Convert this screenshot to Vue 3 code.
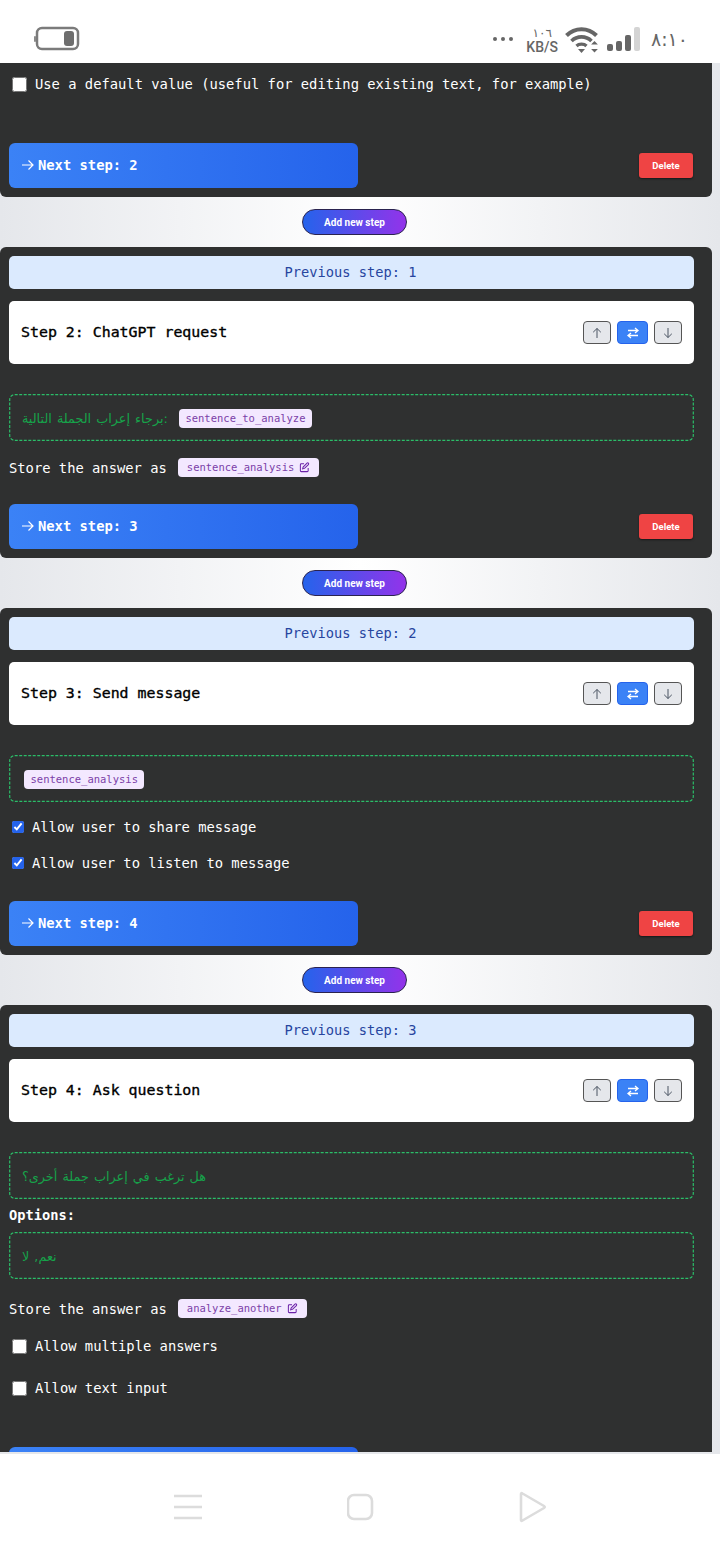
<template>
  <div class="phone">
    <div class="status">
      <svg class="battery" width="46" height="26" viewBox="0 0 46 26">
        <rect x="3" y="2" width="41" height="21" rx="5" fill="none" stroke="#7b7b7b" stroke-width="2.5" />
        <rect x="30" y="5" width="10" height="15" rx="3" fill="#6e6e6e" />
        <rect x="0" y="10" width="2" height="6" rx="1" fill="#8a8a8a" />
      </svg>
      <div class="status-right">
        <div class="dots"><i></i><i></i><i></i></div>
        <div class="speed">
          <span class="speed-num">١٠٦</span>
          <span>KB/S</span>
        </div>
        <svg class="wifi" width="34" height="28" viewBox="0 0 34 28">
          <path d="M1.5 9.5 C10 1 23 1 31.5 9.5" fill="none" stroke="#666" stroke-width="4" />
          <path d="M6.5 15 C12 9.5 21 9.5 26.5 15" fill="none" stroke="#666" stroke-width="3.6" />
          <path d="M11.5 20 C14 17.5 19 17.5 21.5 20" fill="none" stroke="#666" stroke-width="3.2" />
          <path d="M13 23 h7 l-3.5 4z" fill="#666" />
          <path d="M29.5 15 l3.4 3.4 h-6.8z M29.5 26.5 l3.4 -3.4 h-6.8z" fill="#666" />
        </svg>
        <div class="signal"><i class="s1"></i><i class="s2"></i><i class="s3"></i><i class="s4"></i></div>
        <span class="clock">٨:١٠</span>
      </div>
    </div>

    <div class="scroll">
      <section class="card first">
        <label class="check big"><input type="checkbox" />Use a default value (useful for editing existing text, for example)</label>
        <div class="next-row mt-50">
          <button class="next">
            <svg width="14" height="14" viewBox="0 0 14 14"><path d="M1 7h11M7.5 2.5 12 7l-4.5 4.5" fill="none" stroke="#fff" stroke-width="1.2" /></svg>
            Next step: 2
          </button>
          <button class="del">Delete</button>
        </div>
      </section>

      <div v-for="step in steps" :key="step.n">
        <div class="add-wrap"><button class="add">Add new step</button></div>
        <section class="card">
          <div class="prev">Previous step: {{ step.n - 1 }}</div>
          <div class="head">
            <h2>Step {{ step.n }}: {{ step.title }}</h2>
            <div class="moves">
              <button class="move">
                <svg width="12" height="12" viewBox="0 0 12 12"><path d="M6 11V1.5M2.2 5.2 6 1.5l3.8 3.7" fill="none" stroke="#4b5563" stroke-width="1" /></svg>
              </button>
              <button class="move swap">
                <svg width="14" height="12" viewBox="0 0 14 12"><path d="M2 3.5h10M9 1l3 2.5L9 6M12 8.5H2M5 6 2 8.5 5 11" fill="none" stroke="#fff" stroke-width="1.3" /></svg>
              </button>
              <button class="move">
                <svg width="12" height="12" viewBox="0 0 12 12"><path d="M6 1v9.5M2.2 6.8 6 10.5l3.8-3.7" fill="none" stroke="#4b5563" stroke-width="1" /></svg>
              </button>
            </div>
          </div>

          <div class="box mt-30">
            <span v-if="step.text" class="ar">{{ step.text }}</span>
            <span v-if="step.tag" class="tag" :class="{ lone: !step.text }">{{ step.tag }}</span>
          </div>

          <template v-if="step.options">
            <div class="options">Options:</div>
            <div class="box opt-box"><span class="ar">{{ step.options }}</span></div>
          </template>

          <div v-if="step.store" class="store" :class="step.options ? 'mt-20' : 'mt-17'">
            Store the answer as
            <span class="tag edit">
              {{ step.store }}
              <svg width="11" height="11" viewBox="0 0 24 24"><path d="M11 4H5a2 2 0 0 0-2 2v13a2 2 0 0 0 2 2h13a2 2 0 0 0 2-2v-6M17.5 2.5a2.1 2.1 0 0 1 3 3L12 14l-4 1 1-4z" fill="none" stroke="#6b21a8" stroke-width="2.2" /></svg>
            </span>
          </div>

          <template v-if="step.shares">
            <label v-for="(s, i) in step.shares" :key="s" class="check small" :class="i ? 'mt-18' : 'mt-16'"><input type="checkbox" checked />{{ s }}</label>
          </template>

          <template v-if="step.options">
            <label class="check big mt-19"><input type="checkbox" />Allow multiple answers</label>
            <label class="check big mt-24"><input type="checkbox" />Allow text input</label>
          </template>

          <div class="next-row" :class="step.gap">
            <button class="next">
              <svg width="14" height="14" viewBox="0 0 14 14"><path d="M1 7h11M7.5 2.5 12 7l-4.5 4.5" fill="none" stroke="#fff" stroke-width="1.2" /></svg>
              Next step: {{ step.n + 1 }}
            </button>
            <button class="del">Delete</button>
          </div>
        </section>
      </div>
    </div>

    <div class="nav">
      <svg width="30" height="26" viewBox="0 0 30 26"><path d="M1 2h28M1 13h28M1 24h28" stroke="#dcdcdc" stroke-width="2.6" /></svg>
      <svg width="28" height="28" viewBox="0 0 28 28"><rect x="1" y="2" width="24" height="24" rx="6" fill="none" stroke="#dcdcdc" stroke-width="2.6" /></svg>
      <svg width="30" height="32" viewBox="0 0 30 32"><path d="M3 3v26q0 1.500 1.500 .5L26 17q1.500-1 0-2L4.500 2.500Q3 1.500 3 3z" fill="none" stroke="#dcdcdc" stroke-width="2.6" stroke-linejoin="round" /></svg>
    </div>
  </div>
</template>

<script setup>
const steps = [
  {
    n: 2,
    title: "ChatGPT request",
    text: "برجاء إعراب الجملة التالية:",
    tag: "sentence_to_analyze",
    store: "sentence_analysis",
    gap: "mt-27",
  },
  {
    n: 3,
    title: "Send message",
    tag: "sentence_analysis",
    shares: ["Allow user to share message", "Allow user to listen to message"],
    gap: "mt-29",
  },
  {
    n: 4,
    title: "Ask question",
    text: "هل ترغب في إعراب جملة أخرى؟",
    options: "نعم, لا",
    store: "analyze_another",
    gap: "mt-50",
  },
]
</script>

<style>
body {
  margin: 0;
}
</style>

<style scoped>
.phone {
  width: 720px;
  height: 1560px;
  display: flex;
  flex-direction: column;
  overflow: hidden;
  background: #fff;
  font-family: "DejaVu Sans Mono", "Liberation Mono", "DejaVu Sans", monospace;
  font-size: 13.8px;
}

.status {
  height: 63px;
  flex: none;
  box-sizing: border-box;
  padding: 14px 32px 0 34px;
  display: flex;
  justify-content: space-between;
  align-items: center;
  background: #fff;
}
.status-right {
  display: flex;
  align-items: center;
}
.dots {
  display: flex;
  gap: 4px;
  margin-right: 13px;
}
.dots i {
  width: 4px;
  height: 4px;
  border-radius: 50%;
  background: #666;
}
.speed {
  display: flex;
  flex-direction: column;
  align-items: center;
  margin: 3px 7px 0 0;
  font-family: Roboto, sans-serif;
  font-size: 14px;
  font-weight: 500;
  line-height: 14px;
  color: #666;
}
.speed-num {
  font-family: "DejaVu Sans", sans-serif;
  font-size: 12px;
  font-weight: 400;
}
.wifi {
  margin-top: 2px;
}
.signal {
  display: flex;
  align-items: flex-end;
  gap: 3px;
  height: 24px;
  margin: 0 11px 0 8px;
}
.signal i {
  width: 6px;
  border-radius: 2px;
  background: #666;
}
.s1 { height: 7px; }
.s2 { height: 10px; }
.s3 { height: 16px; }
.signal .s4 {
  height: 24px;
  background: #d4d4d4;
}
.clock {
  font-family: "DejaVu Sans", sans-serif;
  font-size: 19px;
  color: #666;
}

.scroll {
  flex: 1;
  min-height: 0;
  overflow: hidden;
  background: linear-gradient(90deg, #e5e7eb, #fff 50%, #e5e7eb);
  padding-right: 8px;
}

.card {
  background: #2f3030;
  border-radius: 6px;
  padding: 9px 18px 9px 9px;
  color: #fff;
}
.card.first {
  border-radius: 0 0 6px 6px;
  padding-top: 12px;
}

.add-wrap {
  display: flex;
  justify-content: center;
  padding: 12px 3px 12px 0;
}
.add {
  width: 105px;
  height: 26px;
  padding: 0;
  border: 1px solid #2a2350;
  border-radius: 13px;
  background: linear-gradient(90deg, #2563eb, #9333ea);
  color: #fff;
  font-family: Roboto, sans-serif;
  font-size: 10px;
  font-weight: 700;
}

.prev {
  height: 33px;
  line-height: 33px;
  padding-right: 2px;
  text-align: center;
  background: #dbeafe;
  border-radius: 5px;
  color: #27459f;
  font-size: 13.7px;
}
.head {
  height: 63px;
  margin-top: 12px;
  padding: 0 12px;
  box-sizing: border-box;
  display: flex;
  justify-content: space-between;
  align-items: center;
  background: #fff;
  border-radius: 5px;
  color: #000;
}
.head h2 {
  margin: 0 0 2px;
  font-size: 14.9px;
  font-weight: 400;
  -webkit-text-stroke: 0.35px #000;
}
.moves {
  display: flex;
  gap: 6px;
}
.move {
  width: 28px;
  height: 23px;
  padding: 0;
  display: flex;
  align-items: center;
  justify-content: center;
  background: #e5e7eb;
  border: 1px solid #555;
  border-radius: 4px;
}
.move.swap {
  width: 31px;
  background: #3b82f6;
  border-color: #2563eb;
}

.box {
  height: 47px;
  box-sizing: border-box;
  padding: 2px 13px 0;
  display: flex;
  align-items: center;
  gap: 11px;
  background: url("data:image/svg+xml,%3Csvg xmlns='http://www.w3.org/2000/svg' width='685' height='47'%3E%3Crect x='.7' y='.7' width='683.600' height='45.600' rx='5' fill='none' stroke='%232bbd68' stroke-width='1.2' stroke-dasharray='3 1.500'/%3E%3C/svg%3E") no-repeat;
}
.ar {
  color: #16a34a;
  font-family: "DejaVu Sans", sans-serif;
  font-size: 12.8px;
  word-spacing: 1px;
}
.tag {
  height: 19px;
  line-height: 19px;
  padding: 0 6.5px;
  background: #f3e8ff;
  border-radius: 4px;
  color: #7b3fa8;
  font-size: 10.5px;
}
.tag.lone {
  margin-left: 2px;
}
.tag.edit {
  display: inline-flex;
  align-items: center;
  gap: 5px;
  padding: 0 9px;
  margin-left: 11px;
}

.store {
  height: 19px;
  display: flex;
  align-items: center;
  color: #fff;
}
.options {
  height: 18px;
  line-height: 18px;
  margin-top: 7px;
  font-weight: 700;
  font-size: 13.7px;
}
.opt-box {
  margin-top: 8px;
}

.check {
  height: 18px;
  display: flex;
  align-items: center;
}
.check input {
  margin: 0;
  flex: none;
}
.check.big input {
  width: 15px;
  height: 15px;
  margin: 0 8px 0 3px;
}
.check.small input {
  width: 12px;
  height: 12px;
  margin: 0 8px 0 3px;
  accent-color: #2563eb;
}

.next-row {
  display: flex;
  justify-content: space-between;
  align-items: center;
}
.next {
  width: 349px;
  height: 45px;
  padding: 0 12px 2px;
  display: flex;
  align-items: center;
  gap: 3px;
  border: 0;
  border-radius: 6px;
  background: linear-gradient(90deg, #3b82f6, #2563eb);
  color: #fff;
  font-family: inherit;
  font-size: 13.8px;
  font-weight: 700;
}
.del {
  width: 54px;
  height: 25px;
  padding: 0;
  margin-right: 1px;
  border: 0;
  border-radius: 3px;
  background: #ef4444;
  box-shadow: 0 1px 2px rgba(0, 0, 0, 0.5);
  color: #fff;
  font-family: Roboto, sans-serif;
  font-size: 9.5px;
  font-weight: 700;
}

.nav {
  height: 108px;
  flex: none;
  box-sizing: border-box;
  padding: 0 172px 0 173px;
  display: flex;
  justify-content: space-between;
  align-items: center;
  background: #fff;
  border-top: 2px solid #e5e7eb;
}

.mt-16 { margin-top: 16px; }
.mt-17 { margin-top: 17px; }
.mt-18 { margin-top: 18px; }
.mt-19 { margin-top: 19px; }
.mt-20 { margin-top: 20px; }
.mt-24 { margin-top: 24px; }
.mt-27 { margin-top: 27px; }
.mt-29 { margin-top: 29px; }
.mt-30 { margin-top: 30px; }
.mt-50 { margin-top: 50px; }
</style>
